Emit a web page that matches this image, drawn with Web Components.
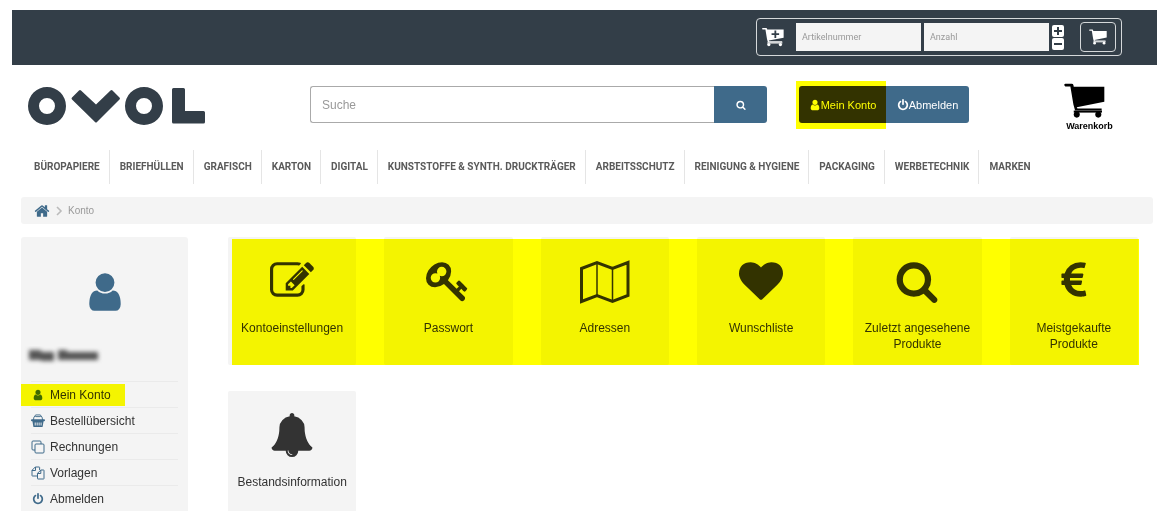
<!DOCTYPE html>
<html lang="de">
<head>
<meta charset="utf-8">
<title>OVOL – Mein Konto</title>
<style>
  body { margin: 0; background: #fff; color: #333; font: 12px/16px "Liberation Sans", Arial, sans-serif; --navy: #333e48; --blue: #3f6a8a; --panel: #f4f4f4; --marker: #ff0; }
</style>
</head>
<body>
<account-page>
  <quick-order slot="top"></quick-order>
  <shop-header slot="header"></shop-header>
  <category-nav slot="nav"></category-nav>
  <bread-crumb slot="crumb">Konto</bread-crumb>
  <account-menu slot="side">
    <menu-item icon="user" marked>Mein Konto</menu-item>
    <menu-item icon="basket">Bestellübersicht</menu-item>
    <menu-item icon="clone">Rechnungen</menu-item>
    <menu-item icon="files">Vorlagen</menu-item>
    <menu-item icon="power">Abmelden</menu-item>
  </account-menu>
  <tile-row marked>
    <account-tile icon="edit">Kontoeinstellungen</account-tile>
    <account-tile icon="key">Passwort</account-tile>
    <account-tile icon="map">Adressen</account-tile>
    <account-tile icon="heart">Wunschliste</account-tile>
    <account-tile icon="search">Zuletzt angesehene Produkte</account-tile>
    <account-tile icon="euro">Meistgekaufte Produkte</account-tile>
  </tile-row>
  <tile-row>
    <account-tile icon="bell">Bestandsinformation</account-tile>
  </tile-row>
</account-page>

<script>
const CART = '<path d="M704 1536q0 52-38 90t-90 38-90-38-38-90 38-90 90-38 90 38 38 90zm896 0q0 52-38 90t-90 38-90-38-38-90 38-90 90-38 90 38 38 90zm128-1088v512q0 24-16.5 42.5t-40.5 21.5l-1044 122q13 60 13 70 0 16-24 64h920q26 0 45 19t19 45-19 45-45 19h-1024q-26 0-45-19t-19-45q0-11 8-31.5t16-36 21.5-40 15.5-29.5l-177-823h-204q-26 0-45-19t-19-45 19-45 45-19h256q16 0 28.5 6.5t19.5 15.5 13 24.5 8 26 5.5 29.5 4.5 26h1201q26 0 45 19t19 45z"/>';
const BIGCART = '<path d="M4 2H23Q27 2 28 6L29 11H120V56L38 72 40 76H112V82H33L28 64 19 10H4Q0 9 1 4Q2 2 4 2Z"/><path d="M29 82H113V88H29Z"/><circle cx="38" cy="94" r="9"/><circle cx="102" cy="94" r="9"/>';
const ICONS = {
  user: ['0 0 1792 1792', '<path d="M1536 1399q0 109-62.5 187t-150.5 78h-854q-88 0-150.5-78t-62.5-187q0-85 8.5-160.5t31.5-152 58.5-131 94-89 134.5-34.5q131 128 313 128t313-128q76 0 134.5 34.5t94 89 58.5 131 31.5 152 8.5 160.5zm-256-887q0 159-112.5 271.5t-271.5 112.5-271.5-112.5-112.5-271.5 112.5-271.5 271.5-112.5 271.5 112.5 112.5 271.5z"/>'],
  search: ['0 0 1792 1792', '<path d="M1216 832q0-185-131.5-316.5t-316.5-131.5-316.5 131.5-131.5 316.5 131.5 316.5 316.5 131.5 316.5-131.5 131.5-316.5zm512 832q0 52-38 90t-90 38q-54 0-90-38l-343-342q-179 124-399 124-143 0-273.5-55.5t-225-150-150-225-55.5-273.5 55.5-273.5 150-225 225-150 273.5-55.5 273.5 55.5 225 150 150 225 55.5 273.5q0 220-124 399l343 343q37 37 37 90z"/>'],
  heart: ['0 0 1792 1792', '<path d="M896 1664q-26 0-44-18l-624-602q-10-8-27.5-26t-55.5-65.5-68-97.5-53.5-121-23.5-138q0-220 127-344t351-124q62 0 126.5 21.5t120 58 95.5 68.5 76 68q36-36 76-68t95.5-68.5 120-58 126.5-21.5q224 0 351 124t127 344q0 221-229 450l-623 600q-18 18-44 18z"/>'],
  power: ['0 0 1792 1792', '<path d="M1664 896q0 156-61 298t-164 245-245 164-298 61-298-61-245-164-164-245-61-298q0-182 80.5-343t226.5-270q43-32 95.5-25t83.5 50q32 42 24.5 94.5t-49.5 84.5q-98 74-151.5 181t-53.5 228q0 104 40.5 198.5t109.5 163.5 163.5 109.5 198.5 40.5 198.5-40.5 163.5-109.5 109.5-163.5 40.5-198.5q0-121-53.5-228t-151.5-181q-42-32-49.5-84.5t24.5-94.5q31-43 84-50t95 25q146 109 226.5 270t80.5 343zm-640-768v640q0 52-38 90t-90 38-90-38-38-90v-640q0-52 38-90t90-38 90 38 38 90z"/>'],
  home: ['0 0 1792 1792', '<path d="M1472 992v480q0 26-19 45t-45 19h-384v-384h-256v384h-384q-26 0-45-19t-19-45v-480q0-1 .5-3t.5-3l575-474 575 474q1 2 1 6zm223-69l-62 74q-8 9-21 11h-3q-13 0-21-7l-692-577-692 577q-12 8-24 7-13-2-21-11l-62-74q-8-10-7-23.5t11-21.5l719-599q32-26 76-26t76 26l244 204v-195q0-14 9-23t23-9h192q14 0 23 9t9 23v408l219 182q10 8 11 21.5t-7 23.5z"/>'],
  euro: ['0 0 1792 1792', '<path d="M1360 1307l35 159q3 12-3 22.5t-17 14.5l-5 1q-4 2-10.5 3.5t-16 4.5-21.5 5.5-25.5 5-30 5-33.5 4.5-36.5 3-38.5 1q-234 0-409-130.5t-238-351.5h-95q-13 0-22.5-9.5t-9.5-22.5v-113q0-13 9.5-22.5t22.5-9.5h66q-2-57 1-105h-67q-14 0-23-9t-9-23v-114q0-14 9-23t23-9h98q67-210 243.5-338t400.5-128q102 0 194 23 11 3 20 15 6 11 3 24l-43 159q-3 13-14 19.5t-24 2.5l-4-1q-4-1-11.5-2.5l-17.5-3.5-22.5-3.5-26-3-29-2.5-29.5-1q-126 0-226 64t-150 176h468q16 0 25 12 10 12 7 26l-24 114q-5 26-32 26h-488q-3 37 0 105h459q15 0 25 12 9 12 6 27l-24 112q-2 11-11 18.5t-20 7.5h-387q48 117 149.5 185.5t228.5 68.5q18 0 36-1.5t33.5-3.5 29.5-4.5 24.5-5 18.5-4.5l12-3 5-2q13-5 26 2 12 7 15 21z"/>'],
  edit: ['0 0 1792 1792', '<path d="M888 1184l116-116-152-152-116 116v56h96v96h56zm440-720q-16-16-33 1l-350 350q-17 17-1 33t33-1l350-350q17-17 1-33zm80 594v190q0 119-84.5 203.5t-203.5 84.5h-832q-119 0-203.5-84.5t-84.5-203.5v-832q0-119 84.5-203.5t203.5-84.5h832q63 0 117 25 15 7 18 23 3 17-9 29l-49 49q-14 14-32 8-23-6-45-6h-832q-66 0-113 47t-47 113v832q0 66 47 113t113 47h832q66 0 113-47t47-113v-126q0-13 9-22l64-64q15-15 35-7t20 29zm-96-738l288 288-672 672h-288v-288zm444 132l-92 92-288-288 92-92q28-28 68-28t68 28l152 152q28 28 28 68t-28 68z"/>'],
  key: ['0 0 1792 1792', '<path d="M832 512q0-80-56-136t-136-56-136 56-56 136q0 42 19 83-41-19-83-19-80 0-136 56t-56 136 56 136 136 56 136-56 56-136q0-42-19-83 41 19 83 19 80 0 136-56t56-136zm851 704q0 17-49 66t-66 49q-9 0-28.5-16t-36.5-33-38.5-40-24.5-26l-96 96 220 220q28 28 28 68 0 42-39 81t-81 39q-40 0-68-28l-671-671q-176 131-365 131-163 0-265.5-102.5t-102.5-265.5q0-160 95-313t248-248 313-95q163 0 265.5 102.5t102.5 265.5q0 189-131 365l355 355 96-96q-3-3-26-24.5t-40-38.5-33-36.5-16-28.5q0-17 49-66t66-49q13 0 23 10 6 6 46 44.5t82 79.5 86.5 86 73 78 28.5 41z"/>'],
  bell: ['0 0 1792 1792', '<path d="M912 1696q0-16-16-16-59 0-101.5-42.5t-42.5-101.5q0-16-16-16t-16 16q0 73 51.5 124.5t124.5 51.5q16 0 16-16zm816-288q0 52-38 90t-90 38h-448q0 106-75 181t-181 75-181-75-75-181h-448q-52 0-90-38t-38-90q50-42 91-88t85-119.5 74.5-158.5 50-206 19.5-260q0-152 117-282.5t307-158.5q-8-19-8-39 0-40 28-68t68-28 68 28 28 68q0 20-8 39 190 28 307 158.5t117 282.5q0 139 19.5 260t50 206 74.5 158.5 85 119.5 91 88z"/>'],
  map: ['0 0 44 44', '<g fill="none" stroke="currentColor"><path stroke-width="3" stroke-linejoin="miter" d="M-1.500 9.500 14 3.500 29.500 9.500 45 3.500V36.500L29.500 42.500 14 36.500-1.500 42.500Z"/><path stroke-width="1.500" d="M14 3V37M29.500 9.500V43"/></g>'],
  basket: ['0 0 15 14', '<path fill="none" stroke="currentColor" d="M2.500 6Q3 1.500 4.500 1.500M12.500 6Q12 1.500 10.500 1.500"/><rect x="4.500" y=".5" width="6" height="1.800" rx=".8" fill="none" stroke="currentColor"/><rect x="0" y="5" width="15" height="2.200" rx="1"/><path fill-rule="evenodd" d="M1.500 7h12l-1 5.800q-.1.700-.8.700H3.300q-.7 0-.8-.7zM4 8.500v3.400h1V8.500zm2.100 0v3.400h1V8.500zm2.100 0v3.400h1V8.500zm2.100 0v3.400h1V8.500z"/>'],
  clone: ['0 0 14 14', '<g fill="none" stroke="currentColor"><rect x="4" y="4" width="9" height="9" rx="1"/><path d="M4 10H2Q1 10 1 9V2Q1 1 2 1H9Q10 1 10 2V4"/></g>'],
  files: ['0 0 14 14', '<g fill="none" stroke="currentColor" stroke-linejoin="round"><path d="M6.500 10H1.400Q1 10 1 9.600V4.300L4.300 1H8.200Q8.600 1 8.600 1.400V4M4.500 1V4.500H1M9.800 4H12.600Q13 4 13 4.400V12.600Q13 13 12.600 13H6.900Q6.500 13 6.500 12.600V7.300L9.800 4V7.500H6.500"/></g>'],
  cart: ['0 0 122 104', BIGCART],
  cartplus: ['0 0 122 104', BIGCART + '<path fill="none" stroke="#333e48" stroke-width="10" d="M74 16V58M53 36H95"/>'],
  bigcart: ['0 0 122 104', BIGCART],
  chevron: ['0 0 8 10', '<path d="M2 1 6 5 2 9" fill="none" stroke="currentColor" stroke-width="1.600"/>']
};

function define(name, css, html) {
  customElements.define(name, class extends HTMLElement {
    constructor() {
      super();
      const t = document.createElement('template');
      t.innerHTML = `<style>*{box-sizing:border-box}a{color:inherit;text-decoration:none}button{font:inherit;border:0;margin:0;padding:0;cursor:pointer}${css}</style>` +
        (typeof html === 'function' ? html(this) : html);
      this.attachShadow({ mode: 'open' }).append(t.content.cloneNode(true));
    }
  });
}
const icon = (name) => `<ui-icon name="${name}"></ui-icon>`;

define('ui-icon', `:host{display:inline-block;flex:none;width:var(--size,14px);height:var(--size,14px)} svg{display:block;width:100%;height:100%;fill:currentColor;overflow:visible}`,
  el => { const [box, art] = ICONS[el.getAttribute('name')]; return `<svg viewBox="${box}" aria-hidden="true">${art}</svg>`; });

define('account-page', `
  :host{display:flex;flex-direction:column;height:100vh;box-sizing:border-box;padding:10px 6px 4px 12px}
  main{flex:1;min-height:0;overflow:hidden;display:grid;grid-template-columns:167px 1fr;gap:40px;margin:13px 0 0 9px;padding-right:19px}
  .tiles{display:flex;flex-direction:column;gap:26px}`,
  `<slot name="top"></slot><slot name="header"></slot><slot name="nav"></slot><slot name="crumb"></slot>
   <main><slot name="side"></slot><div class="tiles"><slot></slot></div></main>`);

define('quick-order', `
  :host{display:flex;flex:none;justify-content:flex-end;background:var(--navy);padding:8px 35px 9px;color:#fff}
  form{display:flex;align-items:center;border:1px solid #d5d8da;border-radius:4px;height:38px;padding:0 5px;--size:22px}
  input{width:125px;height:28px;margin-left:3px;border:0;padding:0 6px;background:#f4f4f4;font:9px Roboto,sans-serif;color:#333}
  input::placeholder{color:#999;opacity:1}
  input:first-of-type{margin-left:12px}
  .steps{display:grid;gap:1px;margin:0 16px 0 3px}
  .steps button{display:grid;place-items:center;width:12px;height:12px;border-radius:2px;background:#fff;color:var(--navy)}
  .steps svg{width:8px;height:8px}
  .go{display:grid;place-items:center;width:36px;height:30px;border:1px solid #d5d8da;border-radius:4px;background:none;color:#fff;--size:18px}`,
  `<form>${icon('cartplus')}<input aria-label="Artikelnummer" placeholder="Artikelnummer"><input aria-label="Anzahl" placeholder="Anzahl">
   <span class="steps"><button type="button" aria-label="Mehr"><svg viewBox="0 0 8 8"><path d="M4 0V8M0 4H8" stroke="currentColor" stroke-width="2"/></svg></button>
   <button type="button" aria-label="Weniger"><svg viewBox="0 0 8 8"><path d="M0 4H8" stroke="currentColor" stroke-width="2"/></svg></button></span>
   <button type="button" class="go" aria-label="In den Warenkorb">${icon('cart')}</button></form>`);

define('shop-header', `
  :host{display:flex;flex:none;align-items:flex-start;padding:18px 42px 0 16px}
  .logo,form,.account{margin-top:3px}
  .logo{flex:none;margin-right:105px;color:var(--navy)} .logo svg{display:block;width:177px;height:40px;fill:currentColor}
  form{display:flex;flex:1;height:37px;margin-right:32px}
  input{flex:1;min-width:0;border:1px solid #aaa;border-right:0;border-radius:3px 0 0 3px;padding:0 11px;font:12px "Liberation Sans",Arial,sans-serif;color:#333;background:#fff}
  input::placeholder{color:#999;opacity:1}
  .find{display:grid;place-items:center;width:53px;border-radius:0 3px 3px 0;background:var(--blue);color:#fff;--size:10px}
  .account{display:flex;height:37px;margin-right:95px;font-size:11px;color:#fff;--size:12px}
  .account a{display:flex;align-items:center;justify-content:center}
  .me{position:relative;width:87px;background:#333;border-radius:3px 0 0 3px}
  .me::after{content:"";position:absolute;inset:-5px 0 -6px -3px;background:var(--marker);mix-blend-mode:multiply}
  .out{width:83px;background:var(--blue);border-radius:0 3px 3px 0}
  .cart{display:block;min-width:51px;color:#000;font:bold 9px/16px "Liberation Sans",Arial,sans-serif}
  .cart ui-icon{display:block;width:41px;height:35px}
  .cart span{display:block;text-align:center}`,
  `<a class="logo" href="#" aria-label="OVOL"><svg viewBox="0 0 177 40"><path fill-rule="evenodd" d="M19 1a19 19 0 1 1 0 38a19 19 0 1 1 0-38zm0 11a8 8 0 1 0 0 16a8 8 0 1 0 0-16zM116 1a19 19 0 1 1 0 38a19 19 0 1 1 0-38zm0 11a8 8 0 1 0 0 16a8 8 0 1 0 0-16zM145.500 2h10q1.500 0 1.500 1.500V25h18.500q1.500 0 1.500 1.500V36q0 1.500-1.500 1.500h-30q-1.500 0-1.500-1.500V3.500q0-1.500 1.500-1.500zM44 11.500l7-7q1-1 2 0L68 18.500l14.500-14q1-1 2 0l7 7q1 1 0 2L69 36q-1 1-2 0L44 13.500q-1-1 0-2z"/></svg></a>
   <form role="search"><input type="text" aria-label="Suche" placeholder="Suche"><button type="button" class="find" aria-label="Suchen">${icon('search')}</button></form>
   <div class="account"><a class="me" href="#">${icon('user')}<span>Mein Konto</span></a><a class="out" href="#">${icon('power')}<span>Abmelden</span></a></div>
   <a class="cart" href="#">${icon('bigcart')}<span>Warenkorb</span></a>`);

define('category-nav', `
  :host{display:block;flex:none;margin-top:16px}
  ul{display:flex;margin:0;padding:0 0 0 11px;list-style:none;font:bold 10px/34px Roboto,sans-serif;color:#5a5a5a}
  li{padding:0 9px 0 10px;border-left:1px solid #e5e5e5;white-space:nowrap} li:first-child{border-color:transparent}`,
  '<nav><ul>' + ['Büropapiere','Briefhüllen','Grafisch','Karton','Digital','Kunststoffe &amp; Synth. Druckträger','Arbeitsschutz','Reinigung &amp; Hygiene','Packaging','Werbetechnik','Marken']
    .map(t => `<li><a href="#">${t.toUpperCase().replace('&AMP;','&amp;')}</a></li>`).join('') + '</ul></nav>');

define('bread-crumb', `
  :host{display:flex;flex:none;align-items:center;height:27px;margin:13px 4px 0 9px;padding:0 13px;box-sizing:border-box;border-radius:3px;background:var(--panel);color:#999;font-size:10px;gap:5px}
  a{display:flex;color:var(--blue);--size:16px} .sep{width:8px;height:10px;color:#bbb}`,
  `<a href="#" aria-label="Startseite">${icon('home')}</a><ui-icon class="sep" name="chevron"></ui-icon><span><slot></slot></span>`);

define('account-menu', `
  :host{display:block;background:var(--panel);border-radius:3px 3px 0 0}
  .avatar{display:block;margin:33px auto 0;color:var(--blue);--size:44px}
  .name{display:block;width:82px;height:20px;margin:32px 0 15px 3px}
  nav{display:block}`,
  `<ui-icon class="avatar" name="user"></ui-icon>
   <svg class="name" viewBox="0 0 82 20" aria-hidden="true"><g fill="#555" style="filter:blur(2px)"><rect x="5" y="4" width="12" height="10"/><rect x="17" y="6" width="13" height="9"/><rect x="34" y="4" width="9" height="10"/><rect x="43" y="6" width="31" height="8"/></g></svg>
   <nav><slot></slot></nav>`);

define('menu-item', `
  :host{display:block;position:relative;padding:0 10px}
  a{display:flex;align-items:center;gap:5px;height:26px;border-top:1px solid #eaeaea}
  ui-icon{color:var(--blue)} ui-icon[name=user],ui-icon[name=power]{--size:12px;margin:0 1px}
  :host([marked])::after{content:"";position:absolute;inset:3px 63px 1px 0;background:var(--marker);mix-blend-mode:multiply}`,
  el => `<a href="#">${icon(el.getAttribute('icon'))}<span><slot></slot></span></a>`);

define('tile-row', `
  :host{display:grid;position:relative;grid-template-columns:repeat(6,1fr);column-gap:28px}
  :host([marked])::after{content:"";position:absolute;inset:2px -1px 0 4px;background:var(--marker);mix-blend-mode:multiply}`,
  '<slot></slot>');

define('account-tile', `
  :host{display:block;background:var(--panel);border-radius:2px}
  a{display:flex;flex-direction:column;align-items:center;gap:17px;min-height:128px;padding:22px 4px 10px;text-align:center;--size:44px}`,
  el => `<a href="#">${icon(el.getAttribute('icon'))}<span><slot></slot></span></a>`);
</script>
</body>
</html>
